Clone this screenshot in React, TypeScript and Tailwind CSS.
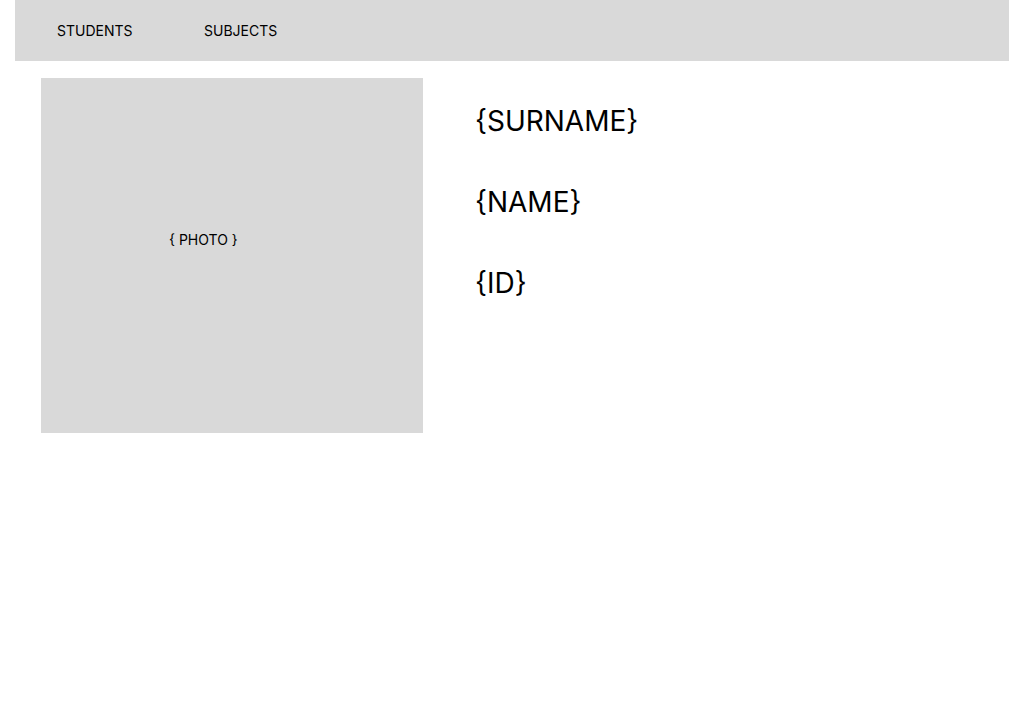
export default function App() {
  return (
    <div className="min-h-[728px] bg-white text-black" style={{ fontFamily: 'Inter, "Noto Sans", sans-serif' }}>
      <nav className="mx-[15px] flex h-[61px] items-center bg-[#d9d9d9] pl-[42px] text-[14px]">
        <span className="w-[147px]">STUDENTS</span>
        <span>SUBJECTS</span>
      </nav>
      <div className="flex pl-[41px] pt-[17px]">
        <div className="h-[355px] w-[382px] bg-[#d9d9d9] pl-[128px] pt-[151px] text-[14px]">
          { '{ PHOTO }' }
        </div>
        <div className="flex flex-col gap-[46px] pl-[52px] pt-[26px] text-[28px] leading-[35px]">
          <div>{'{SURNAME}'}</div>
          <div>{'{NAME}'}</div>
          <div>{'{ID}'}</div>
        </div>
      </div>
    </div>
  );
}
